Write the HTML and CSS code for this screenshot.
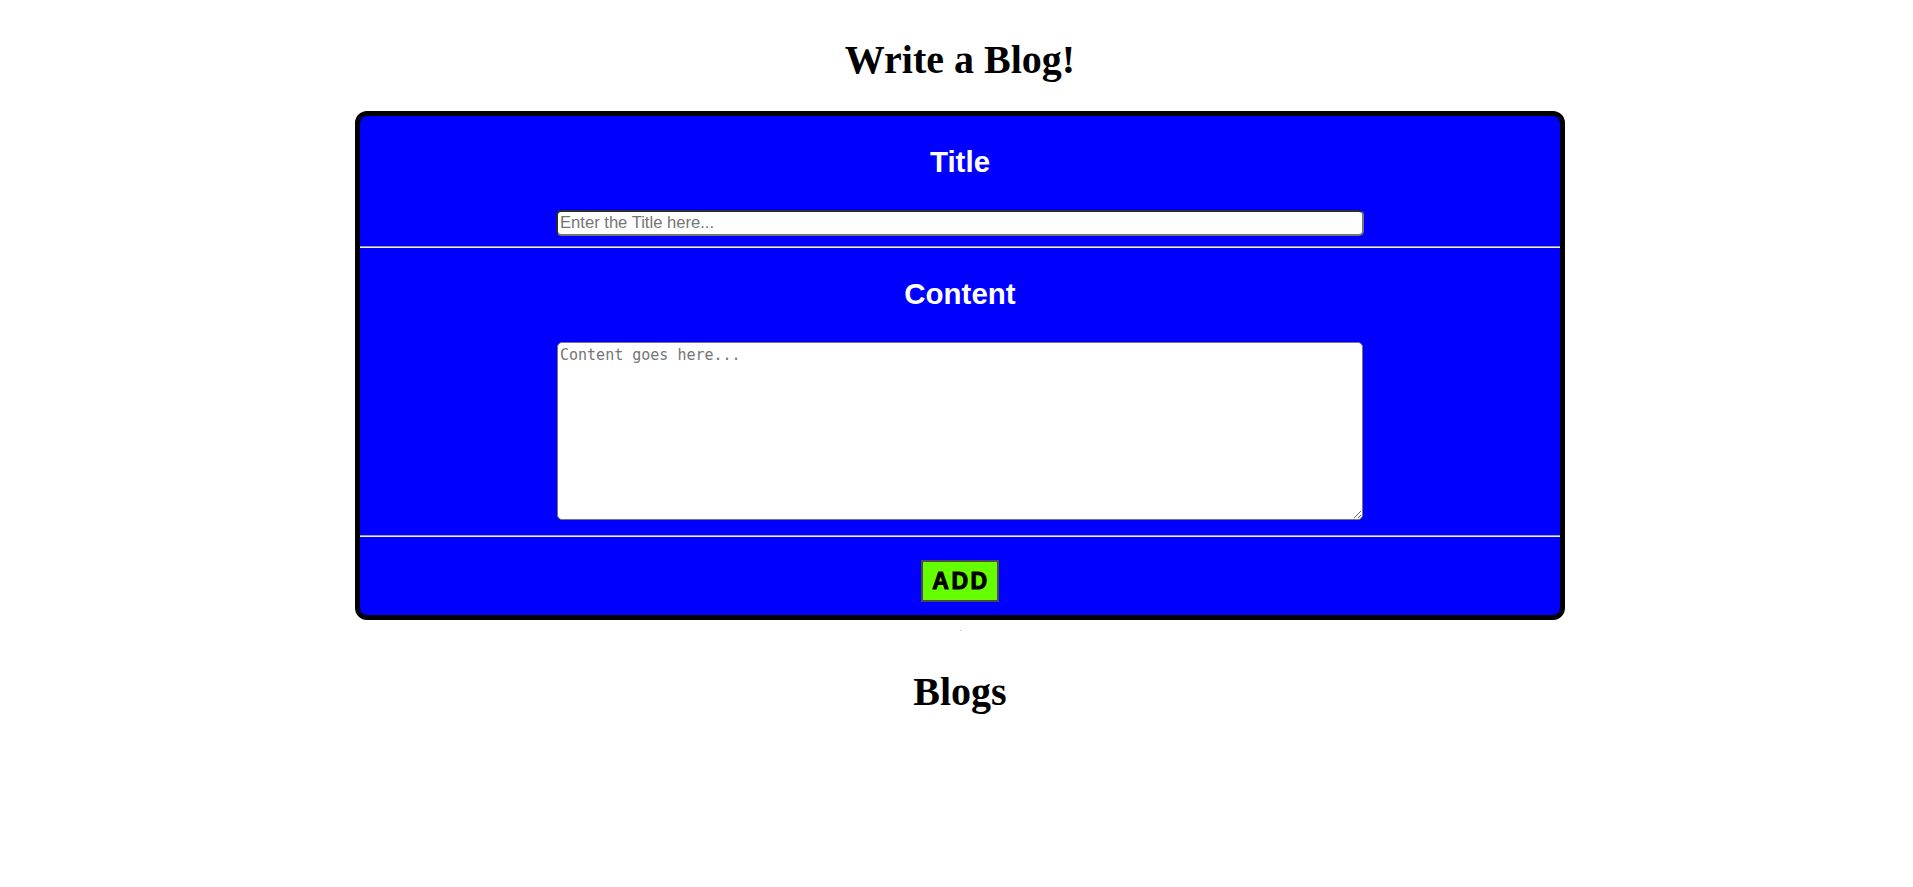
FILE: index.html
```html
<!DOCTYPE html>
<html lang="en">
<head>
<meta charset="utf-8">
<title>Write a Blog!</title>
<link rel="stylesheet" href="styles.css">
</head>
<body>
  <h1 class="page-title">Write a Blog!</h1>
  <form class="editor">
    <div class="section">
      <h2 class="section-title">Title</h2>
      <div class="field field-title">
        <input class="title-input" type="text" placeholder="Enter the Title here...">
      </div>
    </div>
    <hr class="divider">
    <div class="section">
      <h2 class="section-title">Content</h2>
      <div class="field field-content">
        <textarea class="content-input" placeholder="Content goes here..."></textarea>
      </div>
    </div>
    <hr class="divider">
    <div class="actions">
      <button class="add-btn" type="button">ADD</button>
    </div>
  </form>
  <div class="dot-row"><span class="dot"></span></div>
  <h1 class="page-title blogs-title">Blogs</h1>
</body>
</html>
```

FILE: styles.css
```css
html, body {
  background: #ffffff;
}

body {
  margin: 0;
  padding: 37px 0 0 7px;
  font-family: "Liberation Serif", "Times New Roman", serif;
}

.page-title {
  margin: 0 0 28px;
  font-size: 40px;
  line-height: 46px;
  font-weight: bold;
  text-align: center;
  color: #000;
}

.editor {
  width: 1200px;
  margin: 0 auto;
  background: #0000ff;
  border: 5px solid #000;
  border-radius: 12px;
  display: flex;
  flex-direction: column;
}

.section-title {
  margin: 29px 0 31px;
  font-family: "Liberation Sans", Arial, sans-serif;
  font-size: 29.5px;
  line-height: 34px;
  font-weight: bold;
  color: #ffffff;
  text-align: center;
}

.field {
  display: flex;
  justify-content: center;
}

.field-title {
  padding-bottom: 10px;
}

.field-content {
  padding-bottom: 15px;
}

.title-input {
  width: 808px;
  height: 26px;
  box-sizing: border-box;
  padding: 1px 2px;
  border: 2px solid;
  border-color: #2b2b2b #767676 #767676 #2b2b2b;
  border-radius: 5px;
  background: #fff;
  font-family: "Liberation Sans", Arial, sans-serif;
  font-size: 16.6px;
  color: #000;
}

.title-input::placeholder {
  color: #757575;
}

.content-input {
  width: 806px;
  height: 178px;
  box-sizing: border-box;
  padding: 3px 2px;
  border: 1px solid #767676;
  border-radius: 5px;
  background: #fff;
  font-family: "DejaVu Sans Mono", "Liberation Mono", monospace;
  font-size: 15px;
  resize: both;
}

.content-input::placeholder {
  color: #757575;
}

.divider {
  margin: 0;
  height: 0;
  border: 0;
  border-top: 1px solid #9a9a9a;
  border-bottom: 1px solid #eeeeee;
}

.actions {
  display: flex;
  justify-content: center;
  padding: 23px 0 13px;
}

.add-btn {
  width: 78px;
  height: 42px;
  box-sizing: border-box;
  padding: 0 0 0 2px;
  border: 2px solid #4a4a4a;
  background: #66ff00;
  font-family: "Liberation Sans", Arial, sans-serif;
  font-size: 23px;
  font-weight: bold;
  letter-spacing: 2.5px;
  -webkit-text-stroke: 1px #000;
  color: #000;
  cursor: pointer;
}

.dot-row {
  display: flex;
  justify-content: center;
  padding-top: 10px;
  height: 1px;
}

.dot {
  width: 1px;
  height: 1px;
  background: #b0b0b0;
}

.blogs-title {
  margin-top: 38px;
}
```
